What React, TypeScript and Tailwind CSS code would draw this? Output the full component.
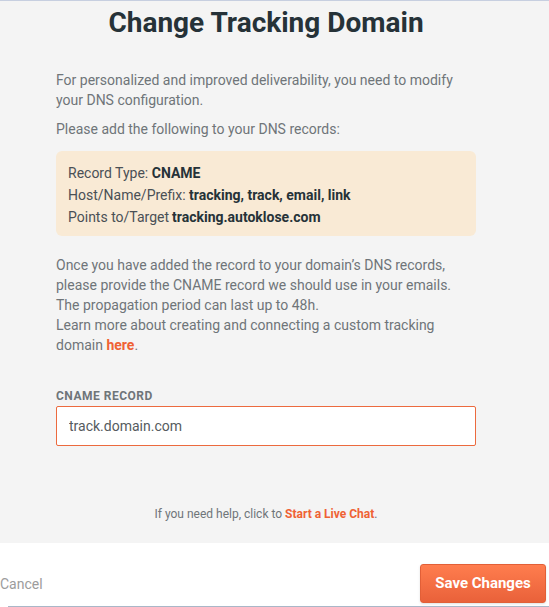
export default function App() {
  return (
    <div className="w-[549px] h-[607px] overflow-hidden bg-white font-['Roboto',_'Liberation_Sans',_sans-serif]">
      <div className="h-[543px] bg-[#f4f4f4] border-t border-[#c7cfe0]">
        <div className="w-[532px]">
          <h1 className="pt-[4px] text-center text-[28px] leading-[36px] font-bold text-[#263238]">
            Change Tracking Domain
          </h1>

          <div className="mx-[56px] mt-[29px] text-[14px] leading-[20px] text-[#6f7579]">
            <p>
              For personalized and improved deliverability, you need to modify your DNS
              configuration.
            </p>
            <p className="mt-[9px]">Please add the following to your DNS records:</p>

            <div className="mt-[12px] rounded-[6px] bg-[#f9ead5] pl-[12px] pt-[11px] pb-[8px] leading-[22px] text-[#4a5055]">
              <div>
                Record Type: <strong className="font-bold text-[#263238]">CNAME</strong>
              </div>
              <div>
                Host/Name/Prefix:{" "}
                <strong className="font-bold text-[#263238]">tracking, track, email, link</strong>
              </div>
              <div>
                Points to/Target
                <strong className="ml-[3px] font-bold text-[#263238]">tracking.autoklose.com</strong>
              </div>
            </div>

            <p className="mt-[19px]">
              Once you have added the record to your domain’s DNS records, please provide the
              CNAME record we should use in your emails.
              <br />
              The propagation period can last up to 48h.
              <br />
              Learn more about creating and connecting a custom tracking domain{" "}
              <a className="font-bold text-[#ef6234]">here</a>.
            </p>

            <label className="block mt-[33px] mb-[2px] text-[12px] leading-[16px] font-bold uppercase tracking-[0.5px] text-[#6f7579]">
              CNAME Record
            </label>
            <input
              type="text"
              defaultValue="track.domain.com"
              className="w-full h-[40px] rounded-[2px] border border-[#ec6a3e] bg-white px-[12px] text-[14px] text-[#555b60] outline-none"
            />
          </div>

          <p className="mt-[60px] text-center text-[12px] leading-[16px] text-[#6f7579]">
            If you need help, click to{" "}
            <a className="font-bold text-[#ef6234]">Start a Live Chat</a>.
          </p>
        </div>
      </div>

      <div className="h-[64px] flex flex-col">
        <div className="flex items-center justify-between pt-[21px] pr-[3px]">
          <button className="text-[14px] leading-[20px] text-[#9c9c9c]">Cancel</button>
          <button className="h-[39px] w-[126px] rounded-[3px] border border-[#e25f37] bg-gradient-to-b from-[#ff7d4e] to-[#e9613a] text-[15px] font-bold text-white shadow-sm">
            Save Changes
          </button>
        </div>
        <div className="mt-auto ml-[8px] h-px bg-[#a9b7c8]" />
      </div>
    </div>
  );
}
